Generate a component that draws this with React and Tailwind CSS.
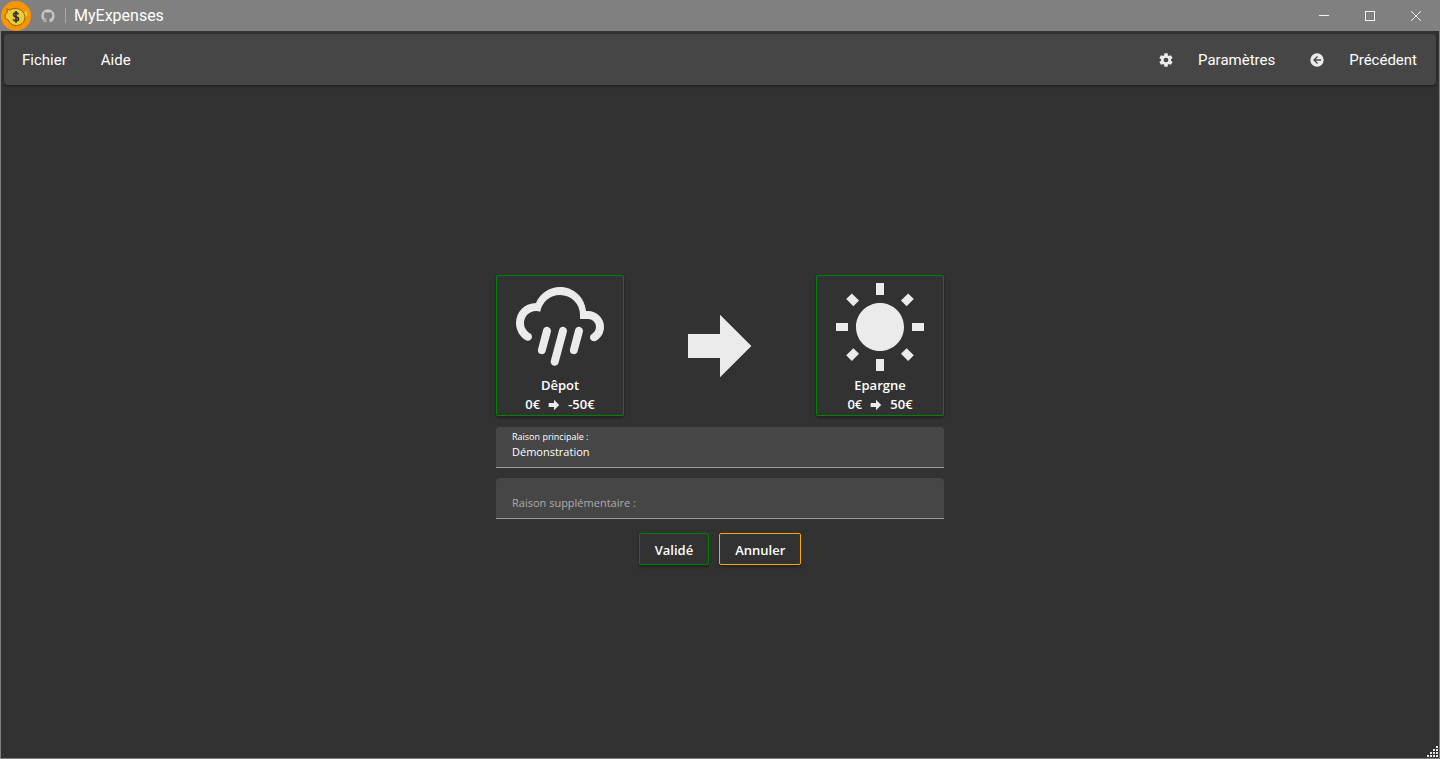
const PATHS = {
  github:
    "M12,2A10,10 0 0,0 2,12C2,16.42 4.87,20.17 8.84,21.5C9.34,21.58 9.5,21.27 9.5,21C9.5,20.77 9.5,20.14 9.5,19.31C6.73,19.91 6.14,17.97 6.14,17.97C5.68,16.81 5.03,16.5 5.03,16.5C4.12,15.88 5.1,15.9 5.1,15.9C6.1,15.97 6.63,16.93 6.63,16.93C7.5,18.45 8.97,18 9.54,17.76C9.63,17.11 9.89,16.67 10.17,16.42C7.95,16.17 5.62,15.31 5.62,11.5C5.62,10.39 6,9.5 6.65,8.79C6.55,8.54 6.2,7.5 6.75,6.15C6.75,6.15 7.59,5.88 9.5,7.17C10.29,6.95 11.15,6.84 12,6.84C12.85,6.84 13.71,6.95 14.5,7.17C16.41,5.88 17.25,6.15 17.25,6.15C17.8,7.5 17.45,8.54 17.35,8.79C18,9.5 18.38,10.39 18.38,11.5C18.38,15.32 16.04,16.16 13.81,16.41C14.17,16.72 14.5,17.33 14.5,18.26C14.5,19.6 14.5,20.68 14.5,21C14.5,21.27 14.66,21.59 15.17,21.5C19.14,20.16 22,16.42 22,12A10,10 0 0,0 12,2Z",
  cog: "M12,15.5A3.5,3.5 0 0,1 8.5,12A3.5,3.5 0 0,1 12,8.5A3.5,3.5 0 0,1 15.5,12A3.5,3.5 0 0,1 12,15.5M19.43,12.97C19.47,12.65 19.5,12.33 19.5,12C19.5,11.67 19.47,11.34 19.43,11L21.54,9.37C21.73,9.22 21.78,8.95 21.66,8.73L19.66,5.27C19.54,5.05 19.27,4.96 19.05,5.05L16.56,6.05C16.04,5.66 15.5,5.32 14.87,5.07L14.5,2.42C14.46,2.18 14.25,2 14,2H10C9.75,2 9.54,2.18 9.5,2.42L9.13,5.07C8.5,5.32 7.96,5.66 7.44,6.05L4.95,5.05C4.73,4.96 4.46,5.05 4.34,5.27L2.34,8.73C2.21,8.95 2.27,9.22 2.46,9.37L4.57,11C4.53,11.34 4.5,11.67 4.5,12C4.5,12.33 4.53,12.65 4.57,12.97L2.46,14.63C2.27,14.78 2.21,15.05 2.34,15.27L4.34,18.73C4.46,18.95 4.73,19.03 4.95,18.95L7.44,17.94C7.96,18.34 8.5,18.68 9.13,18.93L9.5,21.58C9.54,21.82 9.75,22 10,22H14C14.25,22 14.46,21.82 14.5,21.58L14.87,18.93C15.5,18.67 16.04,18.34 16.56,17.94L19.05,18.95C19.27,19.03 19.54,18.95 19.66,18.73L21.66,15.27C21.78,15.05 21.73,14.78 21.54,14.63L19.43,12.97Z",
  back: "M2,12A10,10 0 0,1 12,2A10,10 0 0,1 22,12A10,10 0 0,1 12,22A10,10 0 0,1 2,12M18,11H10L13.5,7.5L12.08,6.08L6.16,12L12.08,17.92L13.5,16.5L10,13H18V11Z",
  arrow: "M4,15V9H12V4.16L19.84,12L12,19.84V15H4Z",
  rain: "M9,12C9.53,12.14 9.85,12.69 9.71,13.22L8.41,18.05C8.27,18.59 7.72,18.9 7.19,18.76C6.65,18.62 6.34,18.07 6.5,17.54L7.78,12.71C7.92,12.17 8.47,11.86 9,12M13,12C13.53,12.14 13.85,12.69 13.71,13.22L11.64,20.95C11.5,21.5 10.95,21.8 10.41,21.66C9.88,21.5 9.56,20.97 9.7,20.43L11.78,12.71C11.92,12.17 12.47,11.86 13,12M17,12C17.53,12.14 17.85,12.69 17.71,13.22L16.41,18.05C16.27,18.59 15.72,18.9 15.19,18.76C14.65,18.62 14.34,18.07 14.5,17.54L15.78,12.71C15.92,12.17 16.47,11.86 17,12M17,10V9A5,5 0 0,0 12,4C9.5,4 7.45,5.82 7.06,8.19C6.73,8.07 6.37,8 6,8A3,3 0 0,0 3,11C3,12.11 3.6,13.08 4.5,13.6V13.59C5,13.87 5.14,14.5 4.87,14.96C4.59,15.43 4,15.6 3.5,15.32V15.33C2,14.47 1,12.85 1,11A5,5 0 0,1 6,6C7,3.65 9.3,2 12,2C15.43,2 18.24,4.66 18.5,8.03L19,8A4,4 0 0,1 23,12C23,13.5 22.2,14.77 21,15.46V15.46C20.5,15.73 19.91,15.57 19.63,15.09C19.36,14.61 19.5,14 20,13.72V13.72C20.6,13.37 21,12.73 21,12A2,2 0 0,0 19,10H17Z",
  sun: "M3.55 19.09L4.96 20.5L6.76 18.71L5.34 17.29M12 6C8.69 6 6 8.69 6 12S8.69 18 12 18 18 15.31 18 12C18 8.68 15.31 6 12 6M20 13H23V11H20M17.24 18.71L19.04 20.5L20.45 19.09L18.66 17.29M20.45 5L19.04 3.6L17.24 5.39L18.66 6.81M13 1H11V4H13M6.76 5.39L4.96 3.6L3.55 5L5.34 6.81L6.76 5.39M1 13H4V11H1M13 20H11V23H13",
};

function Icon({ name, className }) {
  return (
    <svg viewBox="0 0 24 24" fill="currentColor" aria-hidden="true" className={className}>
      <path d={PATHS[name]} />
    </svg>
  );
}

function Logo() {
  return (
    <svg viewBox="0 0 30 30" aria-hidden="true" className="size-[30px]">
      <circle cx="15" cy="15" r="15" fill="#f79400" />
      <path d="M21.5 11.5 Q25 12 25.5 8.8 Q28 13.5 24 17 L22 18 Z" fill="#f2c42c" />
      <path
        d="M6.5 11 L5.8 7.8 L8.8 9 L11.5 7.8 Q20 6.5 23 12.5 Q25.5 18.5 21 22.5 Q15.5 26.8 9.5 22.5 L6.8 18.6 L4.2 17.2 L4.2 13.8 Z"
        fill="#f0cb35"
        stroke="#75631f"
        strokeWidth="0.9"
        strokeLinejoin="round"
      />
      <path
        d="M17.4 13.3 Q16.8 11.9 14.9 11.9 Q12.6 11.9 12.6 13.7 Q12.6 15.3 14.9 15.8 Q17.5 16.3 17.5 18.1 Q17.5 20 15 20 Q12.9 20 12.2 18.4 M15 10 V21.8"
        fill="none"
        stroke="#33362c"
        strokeWidth="1.7"
      />
    </svg>
  );
}

function MenuButton({ icon, children }) {
  return (
    <button type="button" className="flex h-full items-center gap-6 px-[17px] text-[15px]">
      {icon && <Icon name={icon} className="size-4 text-[#ebebeb]" />}
      <span className="pt-[2px]">{children}</span>
    </button>
  );
}

function AccountCard({ icon, name, before, after }) {
  return (
    <button
      type="button"
      className="flex w-32 flex-col items-center rounded-[2px] border border-[#008000] pt-[3px] pb-px text-[13px] leading-[19px] font-semibold shadow-[0_2px_3px_rgba(0,0,0,0.35)]"
    >
      <Icon name={icon} className="mb-px size-24 text-[#ebebeb]" />
      <span>{name}</span>
      <span className="flex items-center gap-[6px]">
        {before}
        <Icon name="arrow" className="size-4 text-[#ebebeb]" />
        {after}
      </span>
    </button>
  );
}

function WindowButton({ label, children }) {
  return (
    <button type="button" aria-label={label} className="flex h-full w-[46px] items-center justify-center">
      <svg
        viewBox="0 0 12 12"
        fill="none"
        stroke="#f2f2f2"
        shapeRendering="crispEdges"
        aria-hidden="true"
        className="size-3"
      >
        {children}
      </svg>
    </button>
  );
}

const GRIP = [
  [9, 0],
  [6, 3], [9, 3],
  [3, 6], [6, 6], [9, 6],
  [0, 9], [3, 9], [6, 9], [9, 9],
];

export default function App() {
  return (
    <div className="relative flex min-h-screen flex-col border-x border-b border-[#808080] bg-[#323232] font-['Open_Sans','Noto_Sans',sans-serif] text-white">
      <header className="flex h-[31px] items-center bg-[#808080] font-[Roboto,sans-serif]">
        <Logo />
        <a href="https://github.com" aria-label="GitHub" className="ml-[9px] text-[#c8c8c8]">
          <Icon name="github" className="size-4" />
        </a>
        <span className="ml-[9px] h-[15px] w-px bg-[#a8a8a8]" />
        <h1 className="ml-2 flex-1 text-[16px] font-normal">MyExpenses</h1>
        <WindowButton label="Réduire">
          <path d="M1 5.5H11" />
        </WindowButton>
        <WindowButton label="Agrandir">
          <rect x="1.5" y="1.5" width="9" height="9" />
        </WindowButton>
        <WindowButton label="Fermer">
          <path d="M1 1L11 11M11 1L1 11" />
        </WindowButton>
      </header>

      <nav className="mx-[3px] mt-[3px] flex h-[51px] justify-between rounded bg-[#464646] pr-[2px] pl-px font-[Roboto,sans-serif] shadow-[0_1px_3px_rgba(0,0,0,0.5)]">
        <div className="flex">
          <MenuButton>Fichier</MenuButton>
          <MenuButton>Aide</MenuButton>
        </div>
        <div className="flex">
          <MenuButton icon="cog">Paramètres</MenuButton>
          <MenuButton icon="back">Précédent</MenuButton>
        </div>
      </nav>

      <main className="flex flex-1 flex-col items-center justify-center pb-[3px]">
        <form className="flex w-full max-w-[448px] flex-col" onSubmit={(e) => e.preventDefault()}>
          <div className="flex items-center justify-between">
            <AccountCard icon="rain" name="Dêpot" before="0€" after="-50€" />
            <Icon name="arrow" className="size-24 text-[#ebebeb]" />
            <AccountCard icon="sun" name="Epargne" before="0€" after="50€" />
          </div>

          <div className="mt-[11px] flex h-[41px] flex-col rounded-t border-b border-[#999999] bg-[#464646] px-4 pt-1">
            <label htmlFor="main-reason" className="text-[9px] leading-3">
              Raison principale :
            </label>
            <input
              id="main-reason"
              type="text"
              defaultValue="Démonstration"
              className="w-full bg-transparent text-[11px] leading-[18px] outline-none"
            />
          </div>

          <div className="mt-[10px] flex h-[41px] items-center gap-2 rounded-t border-b border-[#999999] bg-[#464646] px-4 pt-[10px]">
            <label htmlFor="extra-reason" className="text-[11px] leading-4 text-[#adadad]">
              Raison supplémentaire :
            </label>
            <input
              id="extra-reason"
              type="text"
              className="min-w-0 flex-1 bg-transparent text-[11px] leading-4 outline-none"
            />
          </div>

          <div className="mt-[14px] flex justify-center gap-[10px] text-[13px] font-semibold">
            <button
              type="submit"
              className="h-8 rounded-[2px] border border-[#008000] px-[15px] pt-[3px] shadow-[0_2px_3px_rgba(0,0,0,0.35)]"
            >
              Validé
            </button>
            <button
              type="button"
              className="h-8 rounded-[2px] border border-[#ffa500] px-[15px] pt-[3px] shadow-[0_2px_3px_rgba(0,0,0,0.35)]"
            >
              Annuler
            </button>
          </div>
        </form>
      </main>

      <svg viewBox="0 0 11 11" fill="#e6e6e6" aria-hidden="true" className="absolute right-px bottom-px size-[11px]">
        {GRIP.map(([x, y]) => (
          <rect key={`${x}-${y}`} x={x} y={y} width="2" height="2" />
        ))}
      </svg>
    </div>
  );
}
